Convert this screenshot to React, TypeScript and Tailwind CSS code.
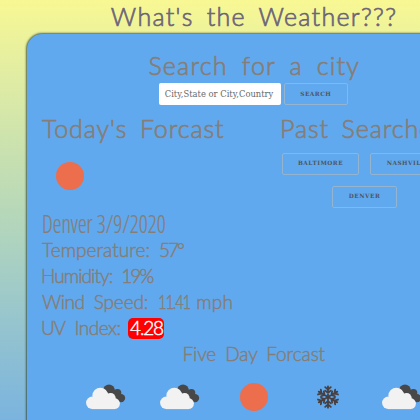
import React from "react";

const slab = "font-['DejaVu_Serif',serif]";

function Cloud() {
  return (
    <svg viewBox="0 0 40 26" className="h-[26px] w-10">
      <g fill="#484848">
        <circle cx="23" cy="6.4" r="5.9" />
        <circle cx="31.4" cy="8.8" r="3.9" />
        <circle cx="35" cy="14.1" r="4.2" />
        <path d="M22 7h9l3 11h-5z" />
      </g>
      <g fill="#f2f2f2">
        <circle cx="6.3" cy="18.8" r="6.2" />
        <circle cx="14.3" cy="11.6" r="7.9" />
        <circle cx="24.6" cy="14" r="5.1" />
        <circle cx="28.4" cy="19.6" r="5.5" />
        <rect x="6" y="13" width="23" height="12.1" />
      </g>
    </svg>
  );
}

function Sun() {
  return <div className="h-7 w-7 rounded-full bg-[#ec6e4c]" />;
}

function Snow() {
  return (
    <svg viewBox="-12 -12 24 24" className="h-6 w-6" stroke="#484040" strokeWidth="1.8" strokeLinecap="round" fill="none">
      {[0, 60, 120, 180, 240, 300].map((a) => (
        <g key={a} transform={`rotate(${a})`}>
          <path d="M0 0V-10.7M-2.8 -9.9L0 -7.4L2.8 -9.9M-2.8 -6.4L0 -4.1L2.8 -6.4" />
        </g>
      ))}
    </svg>
  );
}

function Button({ children, className }: { children: string; className: string }) {
  return (
    <button
      className={`flex shrink-0 items-center justify-center rounded-[2px] border border-[#95b4d0] text-[5.8px] font-bold tracking-[0.5px] text-[#4d5660] ${slab} ${className}`}
    >
      {children}
    </button>
  );
}

export default function App() {
  return (
    <div className="h-[420px] w-[420px] overflow-hidden bg-linear-to-b from-[#f8f893] via-[#b7d8b8] via-50% to-[#7ab3de] font-['Lato',sans-serif] font-light text-[#867d78] [-webkit-text-stroke:0.65px_currentColor]">
      <div className="flex w-[508px] flex-col items-center">
        <h1 className="flex h-[33px] items-center text-[25px] leading-none tracking-[1.3px] whitespace-nowrap text-[#6b6478] [word-spacing:5px]">
          What's the Weather???
        </h1>
        <main className="mt-px flex h-[480px] w-[455px] flex-col rounded-[15px] bg-[#61a9ee] pt-[15px] pr-4 pl-[15.5px] shadow-[0_0_2px_1px_rgba(50,70,50,0.8)]">
          <h2 className="flex h-[34px] items-center justify-center pb-[2px] pl-px text-[25px] leading-none tracking-[1.2px] whitespace-nowrap [word-spacing:6px]">
            Search for a city
          </h2>
          <div className="flex h-[22px] justify-center gap-[3px] pr-px [-webkit-text-stroke:0]">
            <div className={`flex w-[122px] items-center rounded-[2px] bg-white pl-1.5 text-[8.4px] font-normal whitespace-nowrap text-[#686868] ${slab}`}>
              City,State or City,Country
            </div>
            <Button className="w-16">SEARCH</Button>
          </div>
          <div className="flex h-[104px] pt-[7px]">
            <section className="w-[224px] shrink-0">
              <h2 className="flex h-[32px] items-center text-[25px] leading-none tracking-[0.9px] whitespace-nowrap [word-spacing:5px]">
                Today's Forcast
              </h2>
              <div className="pt-[17.5px] pl-[13.5px]"><Sun /></div>
            </section>
            <section className="w-[200px] shrink-0 pl-[14px]">
              <h2 className="flex h-[32px] items-center text-[25px] leading-none tracking-[0.9px] whitespace-nowrap [word-spacing:5px]">
                Past Searches
              </h2>
              <div className="flex gap-[11px] pt-[8.5px] pl-[2px] [-webkit-text-stroke:0]">
                <Button className="h-[22px] w-[77px]">BALTIMORE</Button>
                <Button className="h-[22px] w-[77px]">NASHVILLE</Button>
              </div>
              <div className="pt-[11px] pl-[52px] [-webkit-text-stroke:0]"><Button className="h-[22px] w-[65px]">DENVER</Button></div>
            </section>
          </div>
          <div className="flex h-[28px] w-[180px] origin-left scale-x-[0.88] items-center text-[25px] leading-none whitespace-nowrap font-['Open_Sans',sans-serif] [font-stretch:75%] [-webkit-text-stroke:0.2px_currentColor]">
            Denver 3/9/2020
          </div>
          <div className="text-[19px] leading-[26px] whitespace-nowrap [-webkit-text-stroke:0.45px_currentColor]">
            <p className="flex tracking-[0.05px]">
              Temperature:<span className="ml-[9px] tracking-[-2px]">57°</span>
            </p>
            <p className="-ml-px flex tracking-[-0.9px]">
              Humidity:<span className="ml-[9px] tracking-[-2px]">19%</span>
            </p>
            <p className="flex tracking-[-0.45px]">
              Wind<span className="ml-[9px] tracking-[-0.1px]">Speed:</span>
              <span className="ml-[10px] flex h-[26px] w-[29px] origin-left scale-x-[0.78] tracking-[-1.5px]">11.41</span>
              <span className="ml-[9px] tracking-[0.2px]">mph</span>
            </p>
            <p className="-ml-px flex items-center tracking-[-1.4px]">
              UV<span className="ml-[10px] tracking-[-0.5px]">Index:</span>
              <span className="ml-[8px] flex h-[21px] w-9 items-center justify-center rounded-[5px] bg-[#ff0000] tracking-[-1.2px] text-white">4.28</span>
            </p>
            <h3 className="text-center tracking-[-0.1px] [word-spacing:4px]">Five Day Forcast</h3>
          </div>
          <div className="mt-[14.5px] flex h-[30px] items-center justify-center">
            <div className="flex w-[74px] shrink-0 justify-center pl-px"><Cloud /></div>
            <div className="flex w-[74px] shrink-0 justify-center pl-px"><Cloud /></div>
            <div className="flex w-[74px] shrink-0 justify-center"><Sun /></div>
            <div className="flex w-[74px] shrink-0 justify-center"><Snow /></div>
            <div className="flex w-[74px] shrink-0 justify-center"><Cloud /></div>
          </div>
        </main>
      </div>
    </div>
  );
}
